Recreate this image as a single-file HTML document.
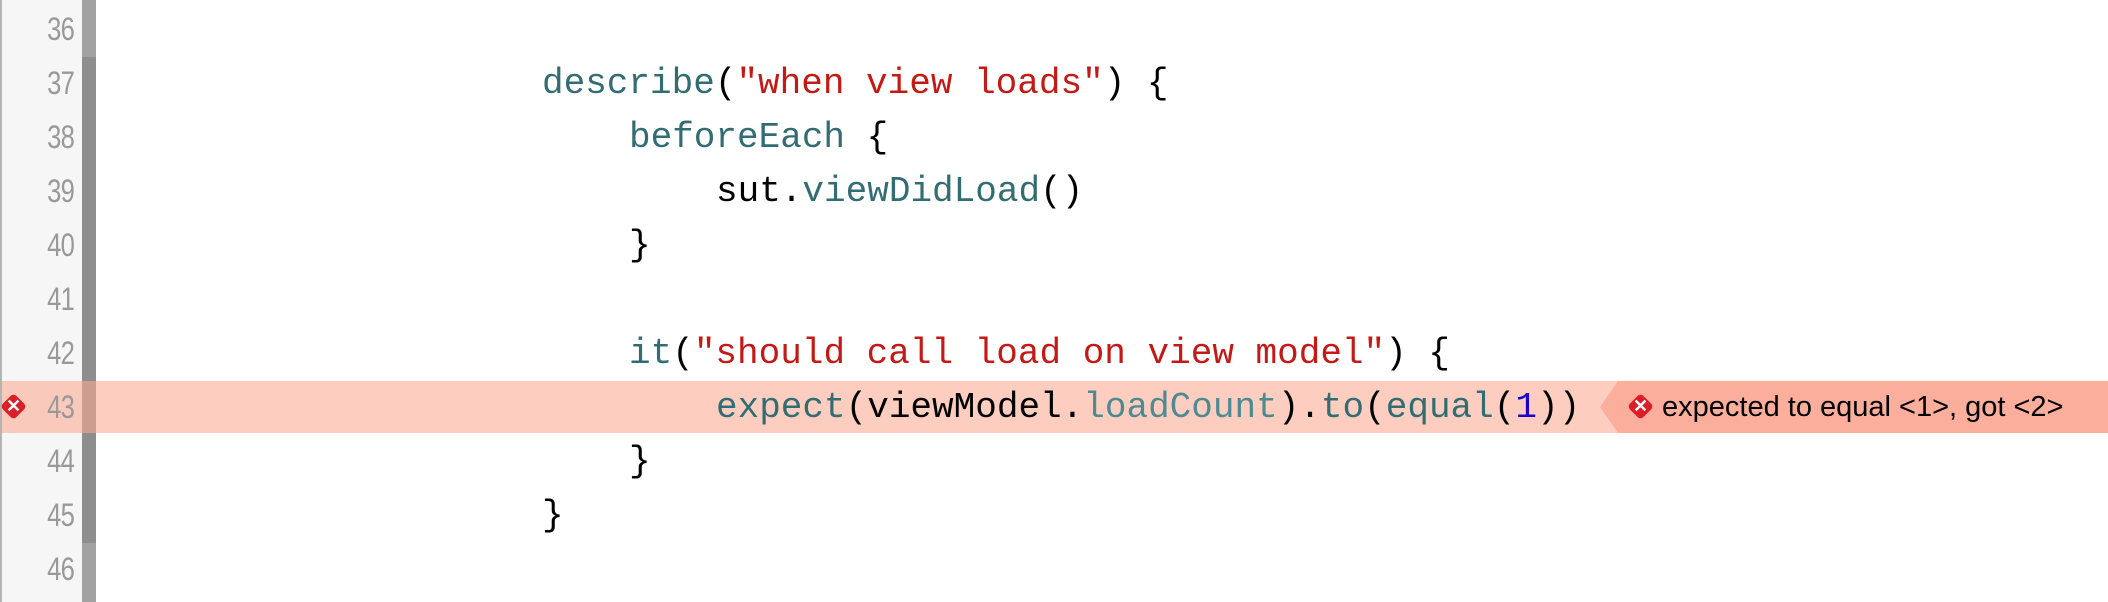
<!DOCTYPE html>
<html><head><style>
html,body{margin:0;padding:0;}
body{width:2108px;height:602px;background:#fff;position:relative;overflow:hidden;}
.gut{position:absolute;left:0;top:0;width:82px;height:602px;background:#f6f6f6;border-left:2px solid #b4b4b4;box-sizing:border-box;}
.sb{position:absolute;left:82px;top:0;width:14px;height:602px;background:#a2a2a2;}
.sb2{position:absolute;left:82px;top:57px;width:14px;height:486px;background:#8e8e8e;}
.ln{position:absolute;right:2034px;width:60px;text-align:right;font:32px "Liberation Sans",sans-serif;color:#999;letter-spacing:-1px;transform:scaleX(0.8);transform-origin:right;}
.hl{position:absolute;left:2px;top:381px;width:2106px;height:52px;background:rgba(252,170,145,0.58);}
.code{position:absolute;font:36px "Liberation Mono",monospace;color:#000;white-space:pre;line-height:54px;height:54px;}
.f{color:#326d74}.p{color:#4c8b92}.s{color:#c41a16}.n{color:#1c00cf}
.bub{position:absolute;left:1618px;top:381px;width:490px;height:52px;background:#fcae9c;}
.arr{position:absolute;left:1600px;top:381px;width:0;height:0;border-top:26px solid transparent;border-bottom:26px solid transparent;border-right:18px solid #fcae9c;}
.msg{position:absolute;left:1662px;top:381px;font:29px "Liberation Sans",sans-serif;line-height:52px;color:#000;white-space:pre;}
.ic{position:absolute;width:19px;height:19px;background:#dc1f26;border-radius:4px;transform:rotate(45deg);}
.x{position:absolute;color:#fff;font:bold 18px "Liberation Sans",sans-serif;width:27px;text-align:center;line-height:27px;}
</style></head><body>
<div class="gut"></div>
<div class="sb"></div><div class="sb2"></div>
<div class="hl"></div>
<div class="ln" style="top:11px">36</div>
<div class="ln" style="top:65px">37</div>
<div class="ln" style="top:119px">38</div>
<div class="ln" style="top:173px">39</div>
<div class="ln" style="top:227px">40</div>
<div class="ln" style="top:281px">41</div>
<div class="ln" style="top:335px">42</div>
<div class="ln" style="top:389px">43</div>
<div class="ln" style="top:443px">44</div>
<div class="ln" style="top:497px">45</div>
<div class="ln" style="top:551px">46</div>
<div class="ic" style="left:4px;top:397px"></div>
<div class="x" style="left:0px;top:393px">✕</div>
<div class="code" style="left:542px;top:57px"><span class="f">describe</span>(<span class="s">"when view loads"</span>) {</div>
<div class="code" style="left:629px;top:111px"><span class="f">beforeEach</span> {</div>
<div class="code" style="left:716px;top:165px">sut.<span class="f">viewDidLoad</span>()</div>
<div class="code" style="left:629px;top:219px">}</div>
<div class="code" style="left:629px;top:327px"><span class="f">it</span>(<span class="s">"should call load on view model"</span>) {</div>
<div class="code" style="left:716px;top:381px"><span class="f">expect</span>(viewModel.<span class="p">loadCount</span>).<span class="f">to</span>(<span class="f">equal</span>(<span class="n">1</span>))</div>
<div class="code" style="left:629px;top:435px">}</div>
<div class="code" style="left:542px;top:489px">}</div>
<div class="arr"></div><div class="bub"></div>
<div class="ic" style="left:1631px;top:397px"></div>
<div class="x" style="left:1627px;top:393px">✕</div>
<div class="msg">expected to equal &lt;1&gt;, got &lt;2&gt;</div>
</body></html>
